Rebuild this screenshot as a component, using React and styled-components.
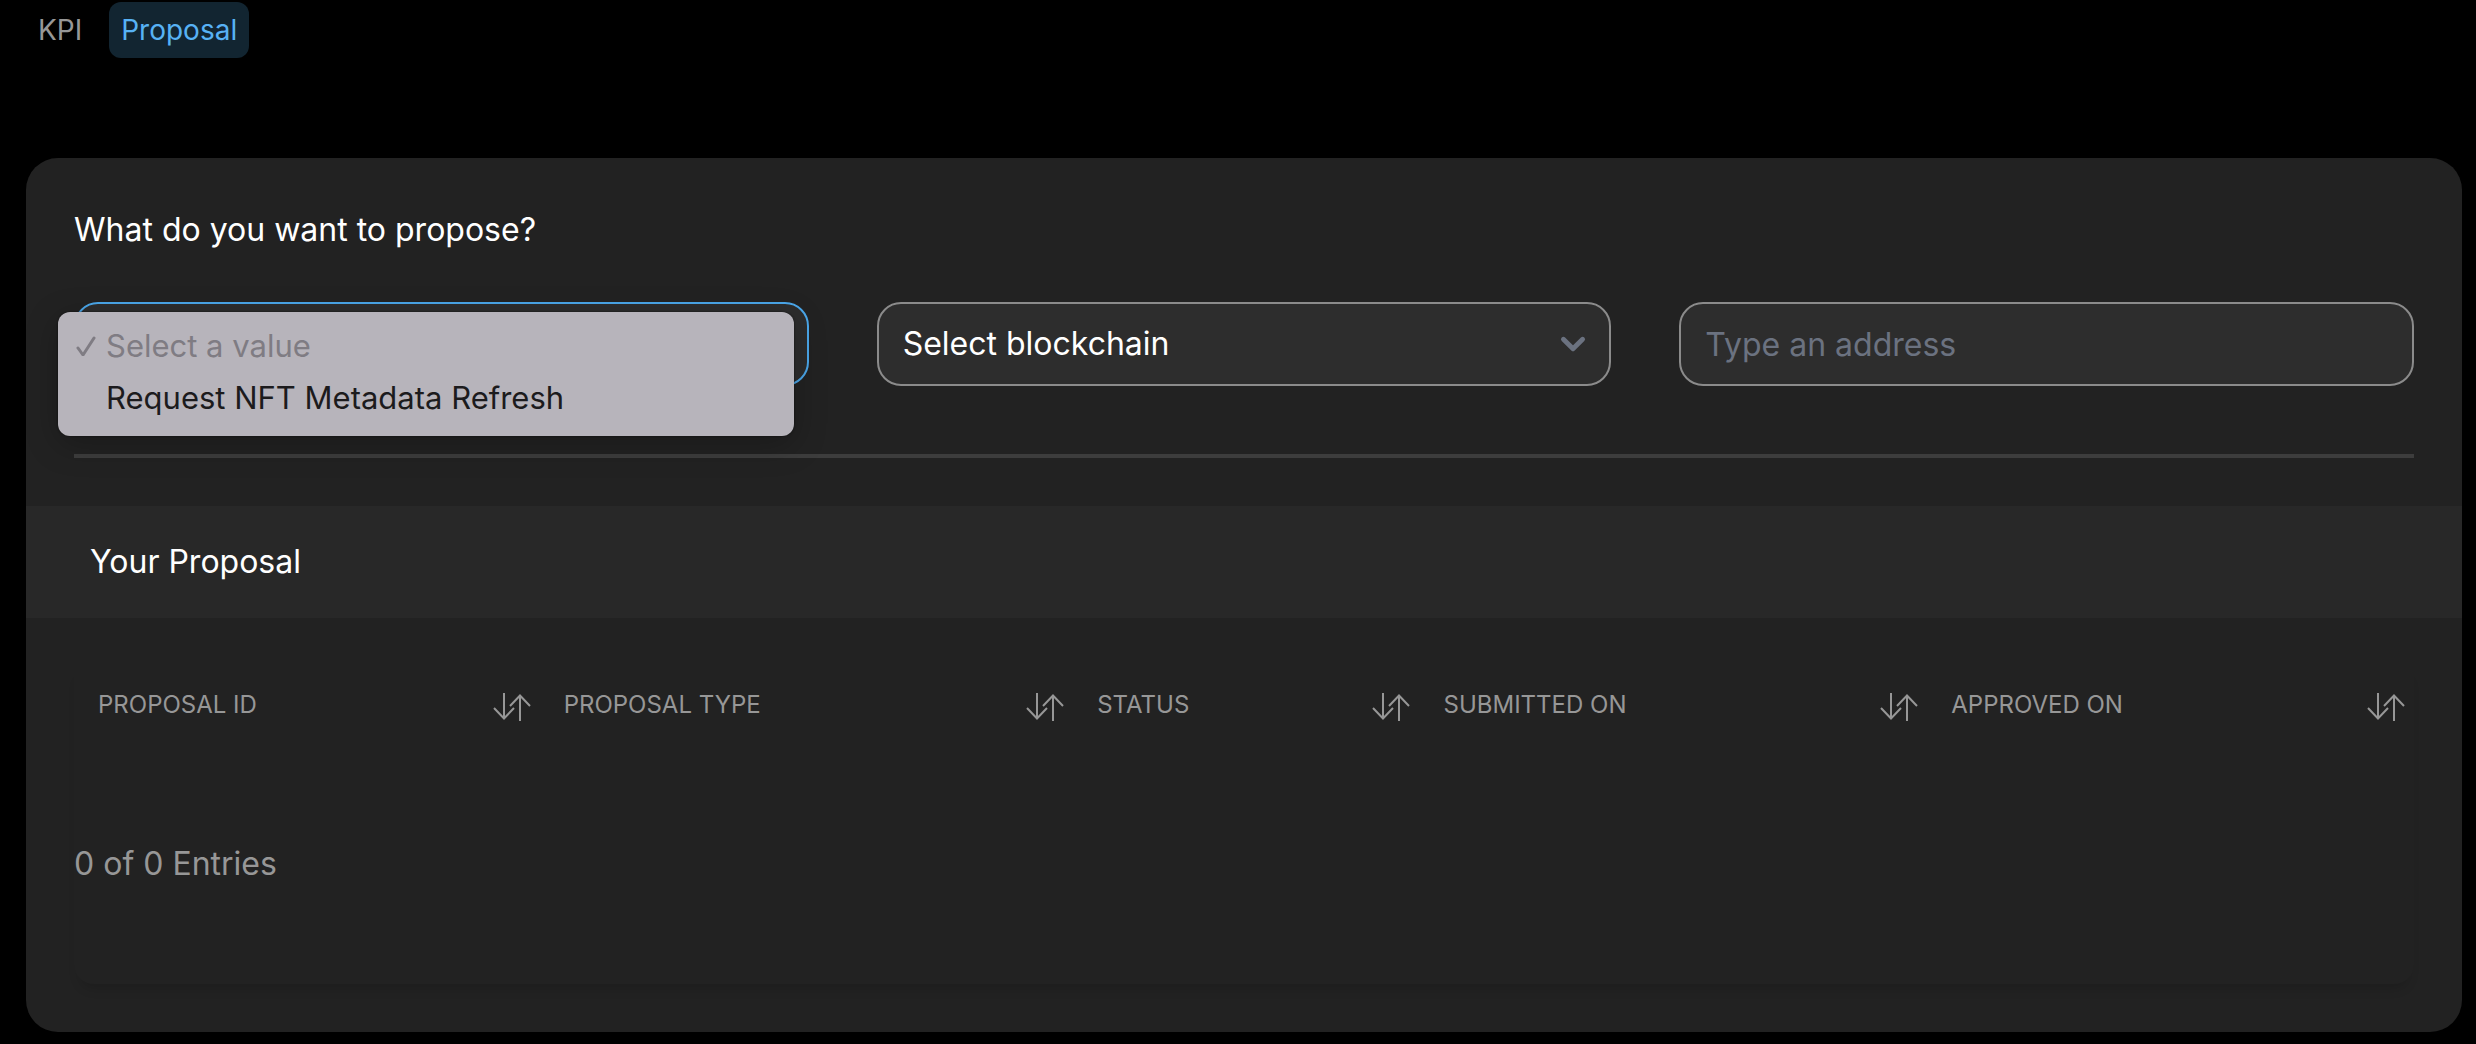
import React, { useState } from "react";
import styled, { createGlobalStyle } from "styled-components";

const GlobalStyle = createGlobalStyle`
  * {
    box-sizing: border-box;
  }

  body {
    margin: 0;
    background: #000000;
    color: #ffffff;
    font-family: Inter, "Liberation Sans", sans-serif;
    font-size: 32px;
    line-height: 48px;
  }

  button,
  input,
  select {
    font: inherit;
  }
`;

const Tabs = styled.nav`
  display: flex;
  gap: 15px;
  padding: 2px 26px 0;
`;

const Tab = styled.button`
  height: 56px;
  padding: 0 12px;
  border: none;
  border-radius: 12px;
  font-size: 28px;
  line-height: 40px;
  cursor: pointer;
  color: ${props => (props.$active ? "#57b2f5" : "#979797")};
  background: ${props => (props.$active ? "#122531" : "transparent")};
`;

const Card = styled.main`
  margin: 100px 14px 10px 26px;
  padding-bottom: 48px;
  border-radius: 32px;
  background: #222222;
`;

const Form = styled.form`
  padding: 48px 48px 0;
`;

const Title = styled.h1`
  margin: 0;
  font-size: 32px;
  font-weight: 400;
  line-height: 48px;
`;

const Fields = styled.div`
  display: grid;
  grid-template-columns: repeat(3, 1fr);
  gap: 68px;
  margin-top: 48px;
`;

const Field = styled.div`
  position: relative;
`;

const Select = styled.select`
  display: block;
  width: 100%;
  height: 84px;
  padding: 0 80px 0 24px;
  border: 2px solid ${props => (props.$open ? "#4ba7ea" : "#8b8b8b")};
  border-radius: 24px;
  outline: none;
  appearance: none;
  background: #2d2d2d;
  color: #ffffff;
`;

const Input = styled.input`
  display: block;
  width: 100%;
  height: 84px;
  padding: 0 24px;
  border: 2px solid #8b8b8b;
  border-radius: 24px;
  outline: none;
  background: #2d2d2d;
  color: #ffffff;

  &::placeholder {
    color: #6b7280;
    opacity: 1;
  }
`;

const Chevron = styled.svg`
  position: absolute;
  top: 18px;
  right: 14px;
  width: 48px;
  height: 48px;
  pointer-events: none;
`;

const Menu = styled.ul`
  position: absolute;
  top: 10px;
  left: -16px;
  z-index: 1;
  width: calc(100% + 1px);
  margin: 0;
  padding: 8px 12px 12px 18px;
  border-radius: 12px;
  list-style: none;
  background: #b7b4bb;
  box-shadow: 0 8px 32px rgba(0, 0, 0, 0.25), 0 0 2px rgba(0, 0, 0, 0.6);
`;

const Option = styled.li`
  display: grid;
  grid-template-columns: 20px 1fr;
  align-items: center;
  column-gap: 10px;
  height: 52px;
  font-size: 31px;
  color: ${props => (props.$muted ? "#7f7c83" : "#1c1b1d")};
`;

const Label = styled.span`
  grid-column: 2;
`;

const Divider = styled.hr`
  height: 4px;
  margin: 68px 0 48px;
  border: none;
  background: #3d3d3d;
`;

const SectionTitle = styled.h2`
  margin: 0;
  padding: 32px 64px;
  font-size: 32px;
  font-weight: 400;
  line-height: 48px;
  background: #282828;
`;

const Panel = styled.section`
  margin: 48px 48px 0;
  padding-bottom: 96px;
  border-radius: 0 0 20px 20px;
  box-shadow: 0 10px 12px -6px rgba(0, 0, 0, 0.16);
`;

const Table = styled.table`
  width: 100%;
  border-collapse: collapse;
  table-layout: fixed;
`;

const HeaderCell = styled.th`
  width: ${props => props.$width};
  height: 78px;
  padding: 0 8px 0 24px;
  text-align: left;
  font-size: 24px;
  font-weight: 400;
  line-height: 32px;
  color: #979797;
`;

const HeaderContent = styled.div`
  display: flex;
  align-items: center;
  justify-content: space-between;
`;

const SortButton = styled.button`
  display: flex;
  padding: 4px 0 0;
  border: none;
  background: none;
  color: inherit;
  cursor: pointer;
`;

const Entries = styled.p`
  margin: 0;
  padding-top: 96px;
  color: #979797;
`;

const SortIcon = () => (
  <svg width="40" height="32" viewBox="0 0 40 32" fill="none" stroke="currentColor" strokeWidth="2" aria-hidden="true">
    <path d="M12 2v26M2 17l10 10.500 10-10.500" />
    <path d="M28 30V4M18 15L28 4.500 38 15" />
  </svg>
);

const CheckIcon = () => (
  <svg width="20" height="20" viewBox="0 0 20 20" fill="none" stroke="currentColor" strokeWidth="3" strokeLinecap="round" strokeLinejoin="round" aria-hidden="true">
    <path d="M2 12l5 7L18 2" />
  </svg>
);

const ChevronIcon = () => (
  <Chevron viewBox="0 0 20 20" fill="none" aria-hidden="true">
    <path
      d="M6 8l4 4 4-4"
      stroke="#6b7280"
      strokeWidth="2"
      strokeLinecap="round"
      strokeLinejoin="round"
    />
  </Chevron>
);

const tabs = ["KPI", "Proposal"];

const columns = [
  { name: "PROPOSAL ID", width: "19.9%" },
  { name: "PROPOSAL TYPE", width: "22.8%" },
  { name: "STATUS", width: "14.8%" },
  { name: "SUBMITTED ON", width: "21.7%" },
  { name: "APPROVED ON", width: "20.8%" }
];

const App = () => {
  const [tab, setTab] = useState("Proposal");
  const [open, setOpen] = useState(true);
  const [type, setType] = useState("");

  const choose = value => {
    setType(value);
    setOpen(false);
  };

  return (
    <>
      <GlobalStyle />
      <Tabs>
        {tabs.map(name => (
          <Tab key={name} type="button" $active={tab === name} onClick={() => setTab(name)}>
            {name}
          </Tab>
        ))}
      </Tabs>
      <Card>
        <Form>
          <Title>What do you want to propose?</Title>
          <Fields>
            <Field>
              <Select
                aria-label="Proposal type"
                $open={open}
                value={type}
                onChange={e => choose(e.target.value)}
              >
                <option value="">Select a value</option>
                <option value="refresh">Request NFT Metadata Refresh</option>
              </Select>
              <ChevronIcon />
              {open && (
                <Menu role="listbox" aria-label="Proposal type">
                  <Option role="option" aria-selected="true" aria-disabled="true" $muted>
                    <CheckIcon />
                    <Label>Select a value</Label>
                  </Option>
                  <Option role="option" aria-selected="false" onClick={() => choose("refresh")}>
                    <Label>Request NFT Metadata Refresh</Label>
                  </Option>
                </Menu>
              )}
            </Field>
            <Field>
              <Select aria-label="Blockchain">
                <option>Select blockchain</option>
              </Select>
              <ChevronIcon />
            </Field>
            <Field>
              <Input type="text" aria-label="Address" placeholder="Type an address" />
            </Field>
          </Fields>
          <Divider />
        </Form>
        <SectionTitle>Your Proposal</SectionTitle>
        <Panel>
          <Table>
            <thead>
              <tr>
                {columns.map(column => (
                  <HeaderCell key={column.name} $width={column.width} scope="col">
                    <HeaderContent>
                      {column.name}
                      <SortButton type="button" aria-label={`Sort by ${column.name}`}>
                        <SortIcon />
                      </SortButton>
                    </HeaderContent>
                  </HeaderCell>
                ))}
              </tr>
            </thead>
          </Table>
          <Entries>0 of 0 Entries</Entries>
        </Panel>
      </Card>
    </>
  );
};

export default App;
